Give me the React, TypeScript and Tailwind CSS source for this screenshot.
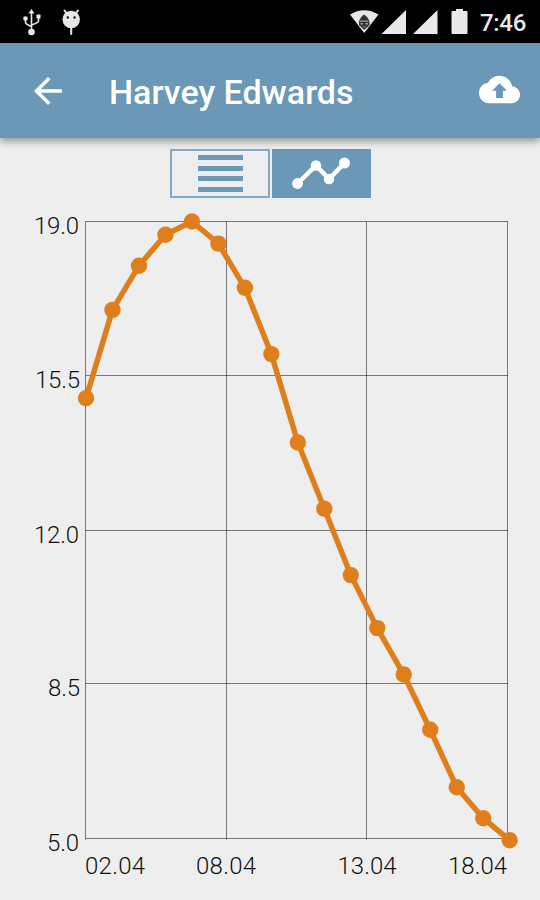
import { MdArrowBack } from "react-icons/md";

const LEFT = 85.5;
const RIGHT = 508;
const TOP = 221.5;
const BOTTOM = 839.5;

const values = [15, 17, 18, 18.7, 19, 18.5, 17.5, 16, 14, 12.5, 11, 9.8, 8.75, 7.5, 6.2, 5.5, 5];

const points = values.map((value, i) => ({
  x: 86 + i * 26.48,
  y: TOP + (19 - value) * 44.2,
}));

const yTicks = [
  { label: "19.0", y: 221.5, x: 79 },
  { label: "15.5", y: 375.5, x: 80 },
  { label: "12.0", y: 530.5, x: 79 },
  { label: "8.5", y: 683.5, x: 80 },
  { label: "5.0", y: 838.5, x: 79 },
];

const xTicks = [
  { label: "02.04", x: 85.5, textX: 85, width: 60 },
  { label: "08.04", x: 226.5, textX: 196, width: 60 },
  { label: "13.04", x: 366.5, textX: 337.5, width: 59 },
  { label: "18.04", x: 507.5, textX: 448, width: 59 },
];

const StatusBar = () => (
  <div className="flex h-[43px] shrink-0 items-center justify-between bg-black text-[#e8e8e8]">
    <div className="flex gap-[19px] pl-[22px]">
      <svg width="20" height="28" viewBox="0 0 20 28" fill="currentColor">
        <path d="M9.500 3v20M3.500 11v3.500q0 1.500 6 4M16.500 8.500v4.500q0 1.500-7 4" fill="none" stroke="currentColor" strokeWidth="1.600" />
        <path d="M9.500 1L12.500 5.500h-6z" />
        <circle cx="3.500" cy="10.500" r="2.300" />
        <path d="M14.500 6.500h4v4h-4z" />
        <circle cx="9.500" cy="24" r="3.300" />
      </svg>
      <svg width="20" height="28" viewBox="0 0 20 28">
        <path d="M3.500 2.500l2 2.500M17 2.500l-2 2.500M10.200 18v8" stroke="currentColor" strokeWidth="2" strokeLinecap="round" />
        <circle cx="10.200" cy="11.500" r="8.700" fill="currentColor" />
        <circle cx="6.800" cy="9.500" r="1.200" fill="#111" />
        <circle cx="13.600" cy="9.500" r="1.200" fill="#111" />
      </svg>
    </div>
    <div className="flex items-center pr-[14px]">
      <svg width="107" height="28" viewBox="0 0 107 28" fill="currentColor">
        <path d="M0 6.500Q14.200-2 28.500 6.500L14.200 25z" />
        <path d="M9 14Q10 9 14 6.500Q18.500 9 19.500 14v3L14.200 22L9 17z" fill="#333" />
        <path d="M10 12.500h8.500v1.200H10zM10.500 15h2.500v1.500h-2.500zM15.500 15h2.500v1.500h-2.500zM12.500 18.500h3.500l-1.700 1.200z" opacity="0.6" />
        <path d="M56 2v24H31.500zM87.500 2v24H63z" />
      </svg>
      <svg className="-ml-[6px]" width="18" height="28" viewBox="0 0 18 28" fill="currentColor">
        <path d="M5 1h7v2h3.500q1 0 1 1v21q0 1-1 1h-14q-1 0-1-1V4q0-1 1-1H5z" />
      </svg>
      <span className="ml-[11px] mt-[2px] w-[46px] whitespace-nowrap text-[24px] leading-none tracking-[-0.3px] font-medium">7:46</span>
    </div>
  </div>
);

const Header = () => (
  <header className="relative flex h-[95px] shrink-0 items-center bg-[#6c98b8] text-white shadow-[0_3px_8px_rgba(0,0,0,0.4)]">
    <MdArrowBack className="ml-[27px] size-[42px]" />
    <h1 className="mt-[2px] ml-[40px] flex-1 text-[34px] leading-none font-medium">Harvey Edwards</h1>
    <svg className="mr-[20px] -mt-[3px] size-[41px]" viewBox="0 0 24 24" fill="currentColor">
      <path d="M19.350 10.040C18.670 6.590 15.640 4 12 4 9.110 4 6.600 5.640 5.350 8.040 2.340 8.360 0 10.910 0 14c0 3.310 2.690 6 6 6h13c2.760 0 5-2.240 5-5 0-2.640-2.050-4.780-4.650-4.960zM14 12.800v4.200h-4v-4.200H7.600L12 8.300l4.400 4.500z" />
    </svg>
  </header>
);

const ViewToggle = () => (
  <div className="mt-[11px] flex shrink-0 justify-center gap-[2px]">
    <button className="flex h-[49px] w-[100px] flex-col items-center justify-center gap-[5.5px] rounded-[1px] border-2 border-[#84a9c4] pl-[2px]">
      <span className="h-[5px] w-[45px] bg-[#6c98b8]" />
      <span className="h-[5px] w-[45px] bg-[#6c98b8]" />
      <span className="h-[5px] w-[45px] bg-[#6c98b8]" />
      <span className="h-[5px] w-[45px] bg-[#6c98b8]" />
    </button>
    <button className="h-[49px] w-[99px] bg-[#6c98b8]">
      <svg width="99" height="49" viewBox="0 0 99 49" fill="#fff">
        <path d="M25.500 34.500L44 16.500L57 30L72.500 14" fill="none" stroke="#fff" strokeWidth="4.500" />
        <circle cx="25.500" cy="34.500" r="5.400" />
        <circle cx="44" cy="16.500" r="5.200" />
        <circle cx="57" cy="30" r="5.200" />
        <circle cx="72.500" cy="14" r="5.500" />
      </svg>
    </button>
  </div>
);

const Chart = () => (
  <svg width="540" height="702" viewBox="0 198 540 702" className="block shrink-0">
    <g stroke="#000" strokeOpacity="0.5" strokeWidth="1">
      {yTicks.map((tick) => (
        <line key={tick.label} x1={LEFT} x2={RIGHT} y1={tick.y} y2={tick.y} />
      ))}
      {xTicks.map((tick) => (
        <line key={tick.label} x1={tick.x} x2={tick.x} y1={TOP} y2={BOTTOM} />
      ))}
    </g>
    <g fill="#111" fontSize="24" fontWeight="300">
      {yTicks.map((tick) => (
        <text key={tick.label} x={tick.x} y={tick.y + 12.5} textAnchor="end" textLength={tick.label.length === 4 ? 45 : 32}>
          {tick.label}
        </text>
      ))}
      {xTicks.map((tick) => (
        <text key={tick.label} x={tick.textX} y="873.500" textLength={tick.width}>
          {tick.label}
        </text>
      ))}
    </g>
    <polyline
      points={points.map((p) => `${p.x},${p.y}`).join(" ")}
      fill="none"
      stroke="#df7f1c"
      strokeWidth="5.500"
      strokeLinejoin="round"
    />
    {points.map((p) => (
      <circle key={p.x} cx={p.x} cy={p.y} r="8.200" fill="#df7f1c" />
    ))}
  </svg>
);

const App = () => {
  return (
    <div className="flex h-[900px] w-[540px] flex-col overflow-hidden bg-[#eeeeee] font-[Roboto,sans-serif]">
      <StatusBar />
      <Header />
      <ViewToggle />
      <Chart />
    </div>
  );
};

export default App;
